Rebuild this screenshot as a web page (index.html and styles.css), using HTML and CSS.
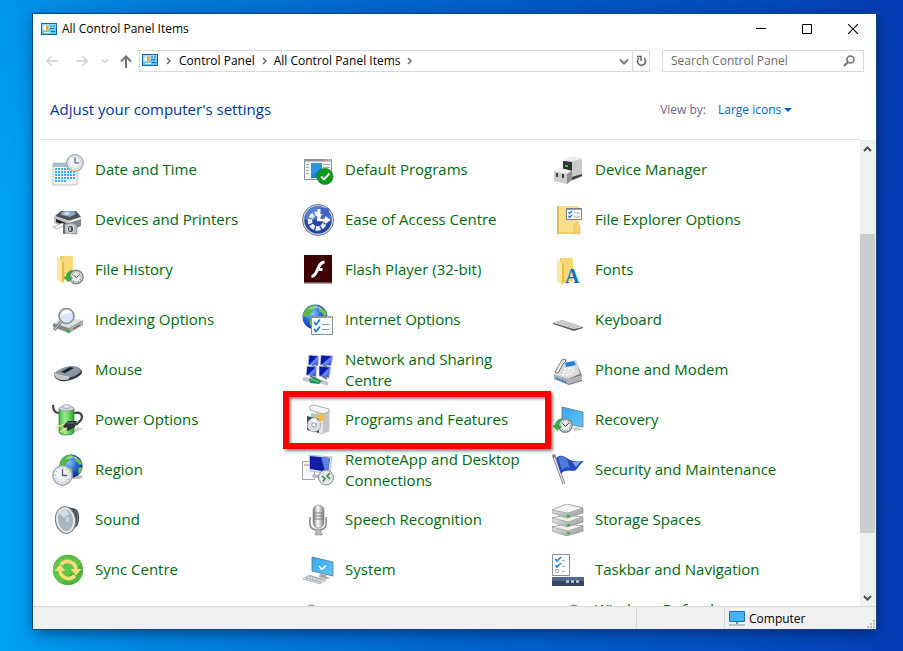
FILE: index.html
```html
<!DOCTYPE html>
<html lang="en-GB">
<head>
<meta charset="utf-8">
<title>All Control Panel Items</title>
<link rel="stylesheet" href="styles.css">
</head>
<body>
<svg class="defs" width="0" height="0" aria-hidden="true">
  <defs>
    <linearGradient id="steel" x1="0" y1="0" x2="1" y2="1"><stop offset="0" stop-color="#f5f5f5"/><stop offset="1" stop-color="#8f9194"/></linearGradient>
    <linearGradient id="screen" x1="0" y1="0" x2="1" y2="1"><stop offset="0" stop-color="#3aa5ef"/><stop offset="1" stop-color="#5cc6fa"/></linearGradient>
    <linearGradient id="navy" x1="0" y1="0" x2="1" y2="1"><stop offset="0" stop-color="#0b149c"/><stop offset=".45" stop-color="#0a1cb5"/><stop offset=".55" stop-color="#6f8ff0"/><stop offset="1" stop-color="#1b33c9"/></linearGradient>
    <linearGradient id="green" x1="0" x2="1"><stop offset="0" stop-color="#3cba40"/><stop offset=".4" stop-color="#9af08e"/><stop offset="1" stop-color="#2ba334"/></linearGradient>
    <linearGradient id="tube" x1="0" x2="1"><stop offset="0" stop-color="#77797c"/><stop offset=".45" stop-color="#fff"/><stop offset="1" stop-color="#77797c"/></linearGradient>
    <radialGradient id="sea" cx=".4" cy=".35" r=".7"><stop offset="0" stop-color="#8fc8ff"/><stop offset=".45" stop-color="#2a6fe0"/><stop offset="1" stop-color="#0b2590"/></radialGradient>
    <radialGradient id="face" cx=".4" cy=".4" r=".7"><stop offset="0" stop-color="#fff"/><stop offset="1" stop-color="#d3dbe3"/></radialGradient>

    <symbol id="clock" viewBox="0 0 20 20">
      <circle cx="10" cy="10" r="9.200" fill="url(#face)" stroke="#a3a9b0" stroke-width="1.400"/>
      <circle cx="10" cy="10" r="6.900" fill="none" stroke="#8d97a2" stroke-width="1" stroke-dasharray=".8 2.800"/>
      <path d="M10 4v6h4.500" fill="none" stroke="#435e7b" stroke-width="1.300"/>
    </symbol>
    <symbol id="history" viewBox="0 0 26 20">
      <circle cx="16" cy="10" r="8.800" fill="#d9dbdc" stroke="#84888a" stroke-width="1.800"/>
      <circle cx="16" cy="10" r="6.200" fill="#f0f1f1" stroke="#626769" stroke-width="1.400" stroke-dasharray="1 2.200"/>
      <path d="M12 7l4 4 4.500-4" fill="none" stroke="#34383a" stroke-width="1.300"/>
      <path d="M11 1C6 2 3 6 3 10H0l5.500 6.500L11 11H7.500C7.500 6 9 3.500 11 1z" fill="#35b53f" stroke="#218b2b" stroke-width=".6"/>
    </symbol>
    <symbol id="folder" viewBox="0 0 18 28">
      <path d="M4 0h13v23L4 25z" fill="#f2cb61"/>
      <path d="M6 0h11v22H6z" fill="#f8d978"/>
      <path d="M1 1l5 4v22l-5-3z" fill="#ffe79c"/>
      <path d="M6 5l2 1.500V25l-2 2z" fill="#e9bb46"/>
    </symbol>
    <symbol id="globe" viewBox="0 0 26 26">
      <circle cx="13" cy="13" r="12.500" fill="url(#sea)"/>
      <path d="M4 5c4-4 8-5 11-4l-2 3-3 1 1 3-4 2-1 4-4-2-1 2c-.5-4 .5-6.500 3-9z" fill="#57b83c"/>
      <path d="M17 3c4 1 7 4 8 8l-3 1-2-3-3-2zM9 14l5 1 1 3-3 4-1 3c-3-3-4-7-2-11zM21 15l4-1c-.5 4-2 6-4 8z" fill="#6ec346"/>
      <path d="M6 6c4-5 11-5 14-1-5-1-10 0-14 1z" fill="#fff" opacity=".45"/>
    </symbol>
    <symbol id="cpanel" viewBox="0 0 16 12">
      <path d="M0 0h16v12H0z" fill="#1166ad"/>
      <path d="M1 1h14v10H1z" fill="#62c8f8"/>
      <path d="M1 1h14v3L1 8z" fill="#92dbfc"/>
      <circle cx="5" cy="5" r="2.700" fill="#fff"/>
      <path d="M5 5V2.300A2.700 2.700 0 0 1 5 7.700z" fill="#f1a31b"/>
      <path d="M9 3h2M12 3h2M9 5.500h4" stroke="#126aaf"/>
      <path d="M3 9.500h6" stroke="#fff"/><path d="M10 8.500h4" stroke="#126aaf"/>
    </symbol>
  </defs>
</svg>

<main class="window">
  <header class="titlebar">
    <svg class="cp-icon" aria-hidden="true"><use href="#cpanel"/></svg>
    <h1 class="title">All Control Panel Items</h1>
    <button class="caption" aria-label="Minimise"><svg width="10" height="11"><path d="M0 5.500h10" stroke="#000"/></svg></button>
    <button class="caption" aria-label="Maximise"><svg width="10" height="10"><path d="M.5.5h9v9h-9z" fill="none" stroke="#000"/></svg></button>
    <button class="caption" aria-label="Close"><svg width="10" height="10"><path d="M0 0l10 10M10 0L0 10" stroke="#000" stroke-width="1.100"/></svg></button>
  </header>

  <nav class="toolbar" aria-label="Location">
    <div class="history">
      <button class="nav" aria-label="Back"><svg width="14" height="12"><path d="M13 6H2M6.500 1.500L2 6l4.500 4.500" fill="none" stroke="#d2d2d2" stroke-width="1.600"/></svg></button>
      <button class="nav" aria-label="Forward"><svg width="14" height="12"><path d="M1 6h11M7.500 1.500L12 6l-4.500 4.500" fill="none" stroke="#d2d2d2" stroke-width="1.600"/></svg></button>
      <button class="nav nav-small" aria-label="Recent locations"><svg width="8" height="6"><path d="M1 1.500l3 3 3-3" fill="none" stroke="#d2d2d2" stroke-width="1.400"/></svg></button>
      <button class="nav nav-up" aria-label="Up"><svg width="12" height="13"><path d="M6 13V2M1 6.500l5-5 5 5" fill="none" stroke="#747474" stroke-width="2"/></svg></button>
    </div>
    <div class="address">
      <svg class="cp-icon" aria-hidden="true"><use href="#cpanel"/></svg>
      <svg class="chevron" viewBox="0 0 5 8"><path d="M1 1l3 3-3 3" fill="none" stroke="#6b6b6b" stroke-width="1.500"/></svg>
      <a class="crumb" href="#">Control Panel</a>
      <svg class="chevron" viewBox="0 0 5 8"><path d="M1 1l3 3-3 3" fill="none" stroke="#6b6b6b" stroke-width="1.500"/></svg>
      <a class="crumb" href="#">All Control Panel Items</a>
      <svg class="chevron" viewBox="0 0 5 8"><path d="M1 1l3 3-3 3" fill="none" stroke="#6b6b6b" stroke-width="1.500"/></svg>
      <button class="address-btn push" aria-label="Previous locations"><svg width="10" height="7"><path d="M1 1.500l4 4 4-4" fill="none" stroke="#7a7a7a" stroke-width="2"/></svg></button>
      <button class="address-btn refresh" aria-label="Refresh"><svg width="11" height="12"><path d="M8 3.200A4 4 0 1 1 3 3.200" fill="none" stroke="#6b6b6b" stroke-width="1.700"/><path d="M1 1.500h4v4.500" fill="none" stroke="#6b6b6b" stroke-width="1.600"/></svg></button>
    </div>
    <div class="search">
      <input class="search-input" type="search" aria-label="Search Control Panel" placeholder="Search Control Panel">
      <svg width="12" height="12" aria-hidden="true"><circle cx="7.500" cy="4.500" r="3.500" fill="none" stroke="#747474" stroke-width="1.700"/><path d="M5 7L1 11" stroke="#747474" stroke-width="2.200"/></svg>
    </div>
  </nav>

  <section class="heading">
    <h2 class="heading-text">Adjust your computer's settings</h2>
    <div class="view">
      <label class="view-label" for="view">View by:</label>
      <select class="view-select" id="view"><option>Large icons</option></select>
      <svg width="8" height="4" aria-hidden="true"><path d="M0 0h8L4 4z" fill="#0066cc"/></svg>
    </div>
  </section>

  <div class="content">
    <ul class="items">
      <li class="item"><svg class="icon" viewBox="0 0 32 32">
        <path d="M1 9h24v21l-3 1H1z" fill="#f8fafb" stroke="#a9b2ba" stroke-width=".8"/><path d="M1 9h24v4H1z" fill="#a8bccb"/>
        <path d="M3 15h20M3 18h20M3 21h20M3 24h20M3 27h11" stroke="#2fb0ea" stroke-width="2" stroke-dasharray="2 1"/>
        <use href="#clock" x="14" y="0" width="18" height="18"/></svg>
        <a class="name" href="#">Date and Time</a></li>
      <li class="item"><svg class="icon" viewBox="0 0 32 32">
        <path d="M2.500 5.500h27v20h-27z" fill="#f3f4f5" stroke="#8d959c"/><path d="M2 5h28v2.500H2z" fill="#8d959c"/><path d="M24 6h1M26 6h1M28 6h1" stroke="#fff"/>
        <path d="M4 10.500h3M4 13.500h3M4 16.500h3M4 19.500h3M21 10.500h7M21 13.500h7" stroke="#9ca4aa"/><path d="M9 9h11v15H9z" fill="#1883d7"/>
        <path d="M20 9v5L9 22V9z" fill="#2b94e3"/>
        <circle cx="23" cy="22.500" r="8" fill="#109a1c" stroke="#0a7c14" stroke-width=".7"/><path d="M19 22.500l3 3 5.500-6" fill="none" stroke="#fff" stroke-width="1.900"/></svg>
        <a class="name" href="#">Default Programs</a></li>
      <li class="item"><svg class="icon" viewBox="0 0 32 32">
        <path d="M11 7l9-4 10 2v18l-8 3-11-3z" fill="#b9babb"/><path d="M11 7l9-4 10 2-10 3z" fill="#eee"/><path d="M20 8l10-3v18l-10 3z" fill="#c9cacb"/>
        <path d="M11 7l9 1v12l-9-2z" fill="#303335"/><path d="M13 11h3v2h-3z" fill="#24d52f"/>
        <path d="M20 26l10-4v-2l-10 3z" fill="#3c3f42"/>
        <path d="M2 17l6-3 12 3v9l-5 4-13-3z" fill="#c9cacc"/><path d="M2 17l6-3 12 3-5 3z" fill="#efefef"/><path d="M15 20l5-3v9l-5 4z" fill="#8d8f92"/>
        <path d="M5 19v4M11 20v4" stroke="#3d4145" stroke-width="2"/></svg>
        <a class="name" href="#">Device Manager</a></li>

      <li class="item"><svg class="icon" viewBox="0 0 32 32">
        <path d="M3 12l6-5 15 0 5 6-11 4z" fill="#4c5054"/><path d="M9 9l3-2 10 0 2 3-6 3-9-2z" fill="#8ea7c8"/><path d="M14 8l4 1-2 2-4-1z" fill="#dce7f4"/>
        <path d="M2 12l15 5 12-4v9l-9 4-8-3-10-4z" fill="#bcbec0"/><path d="M17 17l12-4v9l-12 5z" fill="#85888b"/><path d="M17 17l12-4v2l-12 4z" fill="#efefef"/>
        <path d="M4 15l10 4v3L4 18z" fill="#202326"/><path d="M1 23l9-4 5 2-10 4z" fill="#fafafa" stroke="#888" stroke-width=".6"/>
        <path d="M12 20l9-1 4 2v9l-13-1z" fill="#b9bcbf" stroke="#6d7073" stroke-width=".6"/><path d="M11 20h2v10h-2z" fill="#6c7074"/><ellipse cx="18.500" cy="25" rx="3.300" ry="3.800" fill="#4c5055" stroke="#f2f2f2"/><path d="M18 23v4" stroke="#d7e0ea" stroke-width="1.500"/></svg>
        <a class="name" href="#">Devices and Printers</a></li>
      <li class="item"><svg class="icon" viewBox="0 0 32 32">
        <circle cx="16" cy="16" r="15.500" fill="#d4dae5" stroke="#6b7385"/><circle cx="16" cy="16" r="13.700" fill="#2444a8"/><path d="M3 15a13 13 0 0 1 26 0C20 11 12 19 3 15z" fill="#567bd4"/>
        <circle cx="15.500" cy="17" r="7.500" fill="none" stroke="#e9eefb" stroke-width="4.500" stroke-dasharray="4.600 1.300" stroke-dashoffset="-3"/>
        <path d="M17 4h10v10H17z" fill="#3e63c0"/><path d="M17 17V5" stroke="#fff" stroke-width="3"/><path d="M15 16h10" stroke="#fff" stroke-width="2.400"/><path d="M13.500 10h7L17 15zM23 12l6 4-6 4z" fill="#fff"/></svg>
        <a class="name" href="#">Ease of Access Centre</a></li>
      <li class="item"><svg class="icon" viewBox="0 0 32 32">
        <path d="M5 2h20v28H5z" fill="#f1cc67"/><path d="M7 2h20v26H7z" fill="#f9de8c"/><path d="M5 2h2v28H5z" fill="#e6c05c"/><path d="M22 21l3-3 3 4v8h-6z" fill="#f6d272" stroke="#d9b04a" stroke-width=".5"/>
        <path d="M14.500 4.500h15v11h-15z" fill="#fff" stroke="#76818b"/><path d="M14 5h16" stroke="#76818b" stroke-width="1.500"/>
        <path d="M16.500 8l1 1.500L20 7M16.500 12l1 1.500L20 11" fill="none" stroke="#1f80d2" stroke-width="1.300"/><path d="M22 9h6M22 13h6" stroke="#a0a9b2"/></svg>
        <a class="name" href="#">File Explorer Options</a></li>

      <li class="item"><svg class="icon" viewBox="0 0 32 32"><use href="#folder" x="4" y="2" width="18" height="28"/><use href="#history" x="12" y="15" width="20" height="16"/></svg>
        <a class="name" href="#">File History</a></li>
      <li class="item"><svg class="icon" viewBox="0 0 32 32">
        <path d="M2 3h28v27H2z" fill="#aaa"/><path d="M2 1h28v27.500H2z" fill="#3f0202"/>
        <path d="M22.500 8C15 8 16 22.500 9.500 22.500M15 15.500h5.500" fill="none" stroke="#fff" stroke-width="2.900"/></svg>
        <a class="name" href="#">Flash Player (32-bit)</a></li>
      <li class="item"><svg class="icon" viewBox="0 0 32 32"><use href="#folder" x="4" y="4" width="18" height="28"/><text class="font-mark" x="13" y="29">A</text></svg>
        <a class="name" href="#">Fonts</a></li>

      <li class="item"><svg class="icon" viewBox="0 0 32 32">
        <path d="M1 20l11-6 19 3v4l-14 8-16-6z" fill="#85878a"/><path d="M1 19l11-6 19 3-14 8z" fill="#dedfe0"/><path d="M17 24l14-8v5l-14 8z" fill="#a6a8aa"/>
        <path d="M14 25l4 1v3l-4-1z" fill="#2eb33a"/><path d="M21 25l7-4" stroke="#555"/>
        <path d="M9 18l-7 8" stroke="#777b80" stroke-width="3"/><path d="M9 18l-7 8" stroke="#ddd"/>
        <circle cx="14.500" cy="12" r="7.500" fill="#d6e6f8" stroke="#858d97" stroke-width="1.600"/><path d="M9 12a6 6 0 0 1 11-3c-4-1-7 0-11 3z" fill="#fff"/></svg>
        <a class="name" href="#">Indexing Options</a></li>
      <li class="item"><svg class="icon" viewBox="0 0 32 32"><use href="#globe" x="0" y="0" width="26" height="26"/>
        <path d="M9.500 12.500h21v18h-21z" fill="#fcfcfc" stroke="#8b9094"/><path d="M9 13h22" stroke="#8b9094" stroke-width="2"/><path d="M25 13h1M27 13h1M29 13h1" stroke="#fff"/>
        <path d="M12 18l2 2.500 4-5M12 25l2 2.500 4-5" fill="none" stroke="#1c7fd6" stroke-width="1.800"/><path d="M20 20.500h7M20 25.500h7" stroke="#8a949c"/></svg>
        <a class="name" href="#">Internet Options</a></li>
      <li class="item"><svg class="icon" viewBox="0 0 32 32">
        <path d="M1 19l9-3 21 7v1l-9 3L1 20z" fill="#5c5f63"/><path d="M1 19l9-3 21 7-9 2z" fill="#d7d8da"/>
        <path d="M4 19l19 5M6 18l19 5.500M8 17l19 6" stroke="#a5a9ac" stroke-width=".7" stroke-dasharray="1.600 .8"/></svg>
        <a class="name" href="#">Keyboard</a></li>

      <li class="item"><svg class="icon" viewBox="0 0 32 32">
        <path d="M2 20c5-4 12-8 18-7 6 0 10 2 10 5 0 4-9 8-16 9-6 1-12-2-12-7z" fill="#34383d"/><path d="M2 19c4-3 11-7 17-7 6 0 10 2 10 5-3 4-9 7-16 7-5 0-11-1-11-5z" fill="#8596a7"/>
        <path d="M2 19c3 1 8 2 12 3 3 0 4 1 3 3-2 1-4 1-6 1-5 0-9-3-9-7z" fill="#c4c8cc"/><path d="M9 18l9-5 4 1-9 5z" fill="#1e2226"/></svg>
        <a class="name" href="#">Mouse</a></li>
      <li class="item"><svg class="icon" viewBox="0 0 32 32">
        <g fill="url(#navy)" stroke="#d1d7e2" stroke-width=".7"><path d="M7 1l10 1-1 10-10-1z"/><path d="M19 1l12 1-2 10-11-1z"/><path d="M5 12l10 1-1 10-10-2z"/><path d="M17 12l12 1-2 11-10-2z"/></g>
        <path d="M10 11l3 2M21 11l4 2M8 22l4 2M20 22l5 3" stroke="#677082" stroke-width="1.500"/>
        <path d="M1 25l7 1M18 27l8 3" stroke="#bfc5c8" stroke-width="4"/><path d="M7 25l6-2 7 4-3 3-9-1z" fill="#23945a"/><path d="M9 25l8 3" stroke="#75d4a0"/></svg>
        <a class="name" href="#">Network and Sharing Centre</a></li>
      <li class="item"><svg class="icon" viewBox="0 0 32 32">
        <path d="M2 21l8-11 14-3 6 15v5l-13 4-15-6z" fill="#6f7276"/><path d="M2 21l8-12 14-3 4 14-12 5z" fill="#d7d9db"/><path d="M2 21l14 4 14-4v5l-13 4-15-5z" fill="#b2b5b8"/>
        <path d="M13 9l9-2 2 4-10 2z" fill="#1c7fda"/><path d="M12 15l10-1M11 18l11-1M10 21l10-1" stroke="#f5f5f5" stroke-width="1.800" stroke-dasharray="3 1"/>
        <path d="M3 18l7-12 3-1 1 2-3 3-5 9z" fill="#f4f4f4" stroke="#66696d" stroke-width=".9"/><path d="M4 24l10 4" stroke="#2376cd" stroke-width="2" stroke-dasharray="2 1"/></svg>
        <a class="name" href="#">Phone and Modem</a></li>

      <li class="item"><svg class="icon" viewBox="0 0 32 32">
        <path d="M20 29l11-4-6-2z" fill="#ccc"/><path d="M1 1c0 5 2 8 6 8M22 9c10-2 9 6 5 9l-3 3" fill="none" stroke="#3c4249" stroke-width="2.200"/>
        <path d="M7 5h15v23c0 4-15 4-15 0z" fill="url(#green)" stroke="#3b7942" stroke-width=".8"/><ellipse cx="14.500" cy="4.500" rx="7.500" ry="2.500" fill="#d1d5d9" stroke="#737b80" stroke-width=".6"/><ellipse cx="14.500" cy="2.500" rx="4" ry="2" fill="#dfe3e6" stroke="#80878c" stroke-width=".6"/>
        <path d="M11 22l5-5 9 0-2 6-7 4z" fill="#2e3338"/><path d="M4 24l8-4M8 28l7-4" stroke="#ecd888" stroke-width="1.800"/><path d="M15 19l7 0" stroke="#757d85"/></svg>
        <a class="name" href="#">Power Options</a></li>
      <li class="item item-marked"><svg class="icon" viewBox="0 0 32 32">
        <path d="M8 3l4-1 15 4v21l-8 3-3-2V10z" fill="#e2e3e4" stroke="#a5a7a9" stroke-width=".6"/><path d="M21 9l6-2v20l-6 2z" fill="#c3c5c6"/><path d="M8 2l4-1 15 4v3l-6 2L8 6z" fill="#f6f6f6" stroke="#8d9093" stroke-width=".7"/>
        <path d="M9 9l7 1v5H9z" fill="#a8d1b1"/><circle cx="18.500" cy="13.500" r="3.800" fill="#f2be48"/>
        <path d="M5 12l12 3v14L5 26z" fill="#464b50"/><circle cx="12" cy="21" r="6.800" fill="#dce0e4" stroke="#999fa4" stroke-width=".6"/><path d="M12 21l-3-6a7 7 0 0 1 6 0z" fill="#fff"/><circle cx="12" cy="21" r="2.200" fill="#fff" stroke="#8f979d"/></svg>
        <a class="name" href="#">Programs and Features</a></li>
      <li class="item"><svg class="icon" viewBox="0 0 32 32">
        <path d="M10 3l21 5v15l-21-4z" fill="url(#screen)" stroke="#667680" stroke-width=".8"/><path d="M20 24l5-1 6 2-8 2z" fill="#c5cbd0"/><use href="#history" x="1" y="13" width="20" height="17"/></svg>
        <a class="name" href="#">Recovery</a></li>

      <li class="item"><svg class="icon" viewBox="0 0 32 32"><ellipse cx="23" cy="23" rx="8" ry="2" fill="#bbb"/><use href="#globe" x="7" y="0" width="24" height="24"/><use href="#clock" x="0" y="11" width="21" height="21"/></svg>
        <a class="name" href="#">Region</a></li>
      <li class="item"><svg class="icon" viewBox="0 0 32 32">
        <path d="M.5 7.500h12v18H.5z" fill="#f7f7f7" stroke="#a1a5a9"/><path d="M2 11h8" stroke="#888"/>
        <path d="M7 1l23 2-2 17-20-3z" fill="#dfe2e6" stroke="#9ba2a9" stroke-width=".6"/><path d="M8 2l20 2-2 14-18-3z" fill="#101da5"/><path d="M19 3l9 1-2 14-3-1z" fill="#5f82e4"/><path d="M11 20l8 1v4l-9-2z" fill="#b8bcc1"/>
        <circle cx="24" cy="23.500" r="7.500" fill="#e4e5e6" stroke="#898e92"/><path d="M20 22l3 2.500-2 3M28 19l-3 3 3 3" fill="none" stroke="#338742" stroke-width="1.500"/></svg>
        <a class="name" href="#">RemoteApp and Desktop Connections</a></li>
      <li class="item"><svg class="icon" viewBox="0 0 32 32">
        <path d="M2 3l10 27" stroke="#818589" stroke-width="3"/><path d="M2 3l10 27" stroke="#e8eaeb" stroke-width="1.200"/><circle cx="2" cy="2" r="2" fill="#858a8f"/>
        <path d="M4 4c4-4 8-2 11 0 4 3 7 4 17 3-3 2-5 5-7 8-3 4-8 0-11 2-2 0-4 1-5 3z" fill="#2449b8"/><path d="M6 4c4-3 7-1 9 1l3 9c-4-2-6 0-8 2z" fill="#4f7ade"/><path d="M20 8c3 0 6 0 9-1l-5 6z" fill="#7ba3ef"/></svg>
        <a class="name" href="#">Security and Maintenance</a></li>

      <li class="item"><svg class="icon" viewBox="0 0 32 32">
        <path d="M16 3l8 2c4 3 4 12 1 17l-9 8z" fill="#42474d"/><path d="M23 6c4 4 3 12 0 16" fill="none" stroke="#84898f"/>
        <ellipse cx="13.500" cy="16" rx="10" ry="13.500" fill="#e3e5e7" stroke="#777c81" transform="rotate(-8 13.500 16)"/><ellipse cx="13.500" cy="16" rx="7.500" ry="11" fill="#aab6bd" transform="rotate(-8 13.500 16)"/>
        <path d="M14 16L7 9c3-6 8-4 10 1z" fill="#d4dbe0"/><ellipse cx="15.500" cy="15.500" rx="2.800" ry="3.600" fill="#c3d0dc" stroke="#8798a5" stroke-width=".6"/></svg>
        <a class="name" href="#">Sound</a></li>
      <li class="item"><svg class="icon" viewBox="0 0 32 32">
        <path d="M8 13c-1 10 1 13 8 13s9-3 8-13" fill="none" stroke="#8b9094" stroke-width="1.600"/><path d="M14 25h5v4h1v2h-7v-2h1z" fill="#b5b9bd" stroke="#74787c" stroke-width=".5"/>
        <rect x="11" y="1" width="11" height="23" rx="5.500" fill="url(#tube)" stroke="#797e82" stroke-width=".6"/><path d="M11 9h11M11 12h11M11 15h11" stroke="#787d81"/></svg>
        <a class="name" href="#">Speech Recognition</a></li>
      <li class="item"><svg class="icon" viewBox="0 0 32 32">
        <g stroke="#8b8e91" stroke-width=".6"><path d="M0 23l13-3 18 2v5l-16 5-15-5z" fill="url(#steel)"/><path d="M0 23l13-3 18 2-15 5z" fill="#f2f2f2"/><path d="M0 14l13-3 18 2v5l-16 5-15-5z" fill="url(#steel)"/><path d="M0 14l13-3 18 2-15 5z" fill="#eee"/><path d="M0 6l15-6 16 4v5l-16 5-15-5z" fill="url(#steel)"/><path d="M0 6l15-6 16 4-15 5z" fill="#f4f4f4"/></g>
        <path d="M15 11h3v2h-3zM15 20h3v2h-3zM15 28h3v2h-3z" fill="#36b43a"/></svg>
        <a class="name" href="#">Storage Spaces</a></li>

      <li class="item"><svg class="icon" viewBox="0 0 32 32">
        <circle cx="16" cy="16" r="15.200" fill="#4cb53f"/><path d="M2 12a15 15 0 0 1 27-2L9 29C2 25 0 18 2 12z" fill="#62c44f"/>
        <path d="M9 10.500A8.500 8.500 0 0 1 24 16M23 21.500A8.500 8.500 0 0 1 8 16" fill="none" stroke="#f8dc78" stroke-width="3.500"/><path d="M18.500 15h11L24 21.500zM2.500 17h11L8 10.500z" fill="#f8dc78"/></svg>
        <a class="name" href="#">Sync Centre</a></li>
      <li class="item"><svg class="icon" viewBox="0 0 32 32">
        <path d="M10 3l21 5v14l-21-5z" fill="url(#screen)" stroke="#667680" stroke-width=".8"/><path d="M17 12l3 3.500 4-4" fill="none" stroke="#fff" stroke-width="1.500"/>
        <path d="M18 20l6 1v2l5 1-5 1-7-2z" fill="#a0a6aa"/><path d="M1 25l6-4 17 5-6 4z" fill="#d3d6d8" stroke="#9a9fa3" stroke-width=".6"/><path d="M4 24l15 4M7 22l14 4" stroke="#979ca0" stroke-dasharray="2 1"/></svg>
        <a class="name" href="#">System</a></li>
      <li class="item"><svg class="icon" viewBox="0 0 32 32">
        <path d="M.5.5h17v21H.5z" fill="#fff" stroke="#878c90"/><path d="M3.500 5l1.500 2L9 3M3.500 11L5 13l4-4" fill="none" stroke="#217fcb" stroke-width="1.500"/><path d="M3.500 15.500h3v3h-3z" fill="none" stroke="#aaa"/><path d="M10 6.500h3M10 12.500h3M10 17.500h3" stroke="#a7adb2"/>
        <path d="M0 23h32v9H0z" fill="#344762"/><path d="M0 23h32v4H0z" fill="#4f6788"/><path d="M14 27.500h15" stroke="#aebccc" stroke-width="3" stroke-dasharray="3 2"/></svg>
        <a class="name" href="#">Taskbar and Navigation</a></li>

      <li class="item item-second"><svg class="icon" viewBox="0 0 32 32"><circle cx="9" cy="5" r="4.800" fill="#a7adb3"/></svg></li>
      <li class="item"><svg class="icon" viewBox="0 0 32 32"><circle cx="22" cy="6" r="5.500" fill="#718fae"/></svg>
        <a class="name" href="#">Windows Defender Firewall</a></li>
    </ul>
    <div class="scrollbar">
      <button class="scroll-btn" aria-label="Scroll up"><svg width="9" height="6"><path d="M1 5l3.500-3.500L8 5" fill="none" stroke="#505050" stroke-width="2"/></svg></button>
      <div class="track"><div class="thumb"></div></div>
      <button class="scroll-btn" aria-label="Scroll down"><svg width="9" height="6"><path d="M1 1l3.500 3.500L8 1" fill="none" stroke="#505050" stroke-width="2"/></svg></button>
    </div>
  </div>

  <footer class="status">
    <div class="status-cell"></div>
    <div class="status-cell status-computer">
      <svg width="16" height="15" aria-hidden="true"><path d="M.5.5h15v10H.5z" fill="#42b4f5" stroke="#26719c"/><path d="M7 11h2v2H7z" fill="#8194a1"/><path d="M0 14h16" stroke="#8194a1"/></svg>
      <span>Computer</span>
      <svg class="grip" width="8" height="8" aria-hidden="true"><path d="M6 0h2v2H6zM3 3h2v2H3zM6 3h2v2H6zM0 6h2v2H0zM3 6h2v2H3zM6 6h2v2H6z" fill="#bcbcbc"/></svg>
    </div>
  </footer>
</main>
</body>
</html>
```
FILE: styles.css
```css
* { box-sizing: border-box; }

body {
  margin: 0;
  height: 100vh;
  padding: 14px 27px 22px 33px;
  background:
    linear-gradient(to bottom, rgba(0, 50, 160, 0.1), rgba(0, 120, 230, 0) 30%),
    linear-gradient(to right, #00a2f6, #0086e2 16%, #0066cf 50%, #0450c4 80%, #053db8);
  font-family: "Open Sans", "Noto Sans", sans-serif;
  font-size: 12px;
  line-height: 16px;
  color: #000;
}

.defs { position: absolute; }
svg { display: block; flex: none; }
h1, h2, ul { margin: 0; padding: 0; font-weight: 400; }
a { color: inherit; text-decoration: none; }
button {
  display: flex;
  align-items: center;
  justify-content: center;
  padding: 0;
  border: 0;
  background: none;
}

.window {
  display: flex;
  flex-direction: column;
  height: 100%;
  background: #fff;
  box-shadow: 0 0 0 1px #0b477e, 2px 4px 14px rgba(0, 20, 70, 0.6);
}

.titlebar { display: flex; align-items: center; height: 29px; padding-left: 8px; }
.cp-icon { width: 16px; height: 12px; }
.title { flex: 1; margin-left: 5px; font-size: 12px; }
.caption { width: 46px; height: 28px; }

.toolbar { display: flex; margin-top: 7px; padding: 0 12px; }
.history { display: flex; align-items: center; }
.nav { width: 30px; height: 22px; justify-content: flex-start; }
.nav-small { width: 18px; margin-left: -4px; }
.nav-up { width: 20px; padding-left: 1px; }
.address, .search { display: flex; align-items: center; height: 22px; border: 1px solid #d9d9d9; }
.address { flex: 1; padding-left: 2px; }
.chevron { width: 5px; height: 8px; margin: 0 7px; }
.cp-icon + .chevron { margin: 0 8px; }
.address .cp-icon { margin-bottom: 2px; }
.crumb { white-space: nowrap; }
.address-btn { width: 17px; height: 20px; }
.push { margin-left: auto; }
.refresh { border-left: 1px solid #d9d9d9; }
.search { width: 202px; margin-left: 12px; padding: 0 8px; }
.search-input {
  flex: 1;
  min-width: 0;
  padding: 0;
  border: 0;
  outline: 0;
  font: inherit;
  background: none;
}
.search-input::placeholder { color: #6d6d6d; }

.heading {
  display: flex;
  align-items: center;
  height: 68px;
  margin: 0 16px 0 8px;
  padding: 8px 68px 2px 9px;
  border-bottom: 1px solid #dbe2e7;
}
.heading-text { flex: 1; font-size: 15px; line-height: 20px; color: #003399; }
.view { display: flex; align-items: center; padding-top: 2px; }
.view-label { color: #6a6489; }
.view-select {
  margin: 0 2px 0 12px;
  padding: 0;
  border: 0;
  appearance: none;
  background: none;
  font: inherit;
  color: #0066cc;
}

.content { display: flex; flex: 1; min-height: 0; }
.items {
  display: grid;
  flex: 1;
  grid-template-columns: repeat(auto-fill, 250px);
  grid-auto-rows: 50px;
  align-content: start;
  padding: 5px 0 0 19px;
  overflow: hidden;
  list-style: none;
}
.item { position: relative; display: flex; align-items: center; gap: 11px; padding-right: 20px; }
.item-second { grid-column: 2; }
.icon { width: 32px; height: 32px; }
.name { padding-bottom: 1px; font-size: 15px; line-height: 21px; color: #006b0d; }
.font-mark { font: bold 20px "Liberation Serif", serif; fill: #0a6fc8; }

.item-marked::after {
  content: "";
  position: absolute;
  z-index: 1;
  inset: -4px 1px -4px -19px;
  border: 6px solid #fe0000;
  box-shadow: 2px 2px 3px rgba(0, 0, 0, 0.5), inset 2px 2px 3px rgba(0, 0, 0, 0.45);
  pointer-events: none;
}

.scrollbar { display: flex; flex-direction: column; width: 16px; padding-right: 1px; background: #f0f0f0; }
.scroll-btn { width: 15px; height: 17px; }
.track { display: grid; flex: 1; grid-template-rows: 77fr 299fr 56fr; }
.thumb { grid-row: 2; background: #cdcdcd; }

.status {
  display: flex;
  justify-content: flex-end;
  height: 23px;
  border-top: 1px solid #d7d7d7;
  background: #f0f0f0;
}
.status-cell { width: 88px; margin-top: 1px; border-left: 1px solid #d7d7d7; }
.status-computer { display: flex; align-items: center; width: 152px; gap: 4px; padding-left: 4px; }
.grip { align-self: flex-end; margin: 0 1px 1px auto; }
```
